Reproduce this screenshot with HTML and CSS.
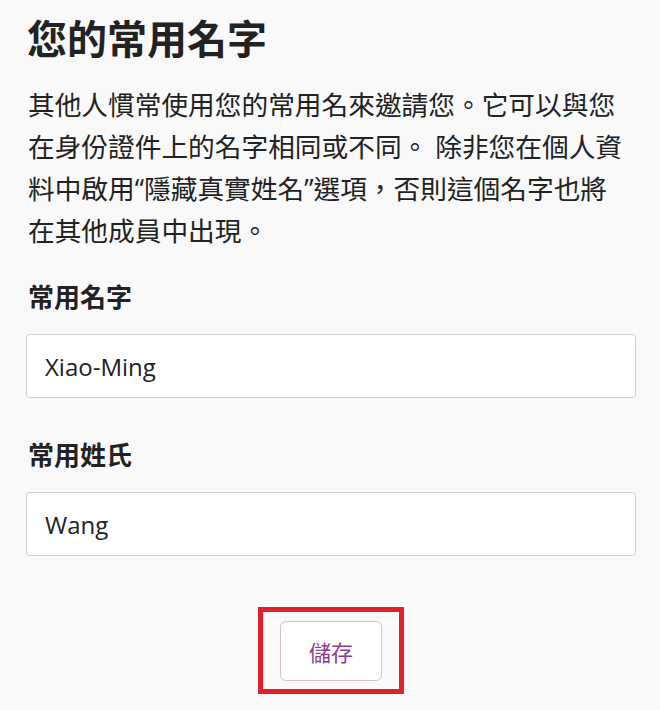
FILE: index.html
```html
<!DOCTYPE html>
<html lang="zh-Hant">
<head>
  <meta charset="UTF-8">
  <meta name="viewport" content="width=device-width, initial-scale=1.0">
  <title>您的常用名字</title>
  <link rel="stylesheet" href="styles.css">
</head>
<body>

  <h1>您的常用名字</h1>

  <p class="intro">其他人慣常使用您的常用名來邀請您。它可以與您在身份證件上的名字相同或不同。 除非您在個人資料中啟用“隱藏真實姓名”選項，否則這個名字也將在其他成員中出現。</p>

  <form class="name-form">
    <label for="firstName">常用名字</label>
    <input type="text" id="firstName" value="Xiao-Ming">

    <label for="lastName">常用姓氏</label>
    <input type="text" id="lastName" value="Wang">

    <div class="save-area">
      <div class="highlight">
        <button type="submit">儲存</button>
      </div>
    </div>
  </form>

</body>
</html>
```

FILE: styles.css
```css
body {
  font-family: "Noto Sans CJK TC", sans-serif;
  background-color: #f9f9f9;
  color: #222;
  margin: 0;
  padding: 0 24px 0 26px;
}

h1 {
  font-size: 40px;
  line-height: 50px;
  font-weight: bold;
  margin: 12px 0 0 1px;
  color: #222;
}

.intro {
  font-family: "Open Sans", "Noto Sans CJK TC", sans-serif;
  font-size: 26.7px;
  line-height: 42px;
  margin: 22px 5px 0 2px;
}

.name-form label {
  display: block;
  font-size: 26px;
  line-height: 36px;
  font-weight: bold;
  margin: 26px 0 20px 2px;
}

.name-form label + input + label {
  margin-top: 38px;
}

.name-form input[type="text"] {
  display: block;
  box-sizing: border-box;
  width: 100%;
  height: 64px;
  padding: 0 18px;
  background-color: #fff;
  border: 1px solid #cfcfcf;
  border-radius: 4px;
  font-family: "Open Sans", "Noto Sans CJK TC", sans-serif;
  font-size: 24px;
  color: #222;
}

.save-area {
  display: flex;
  justify-content: center;
  margin-top: 51px;
}

.highlight {
  border: 5px solid #e0202a;
  padding: 9px 17px 8px;
}

.highlight button {
  display: block;
  width: 102px;
  height: 60px;
  background-color: #fff;
  border: 1px solid #d6bfd6;
  border-radius: 6px;
  color: #8e3c8e;
  font-family: "Noto Sans CJK TC", sans-serif;
  font-size: 22px;
  cursor: pointer;
}
```
